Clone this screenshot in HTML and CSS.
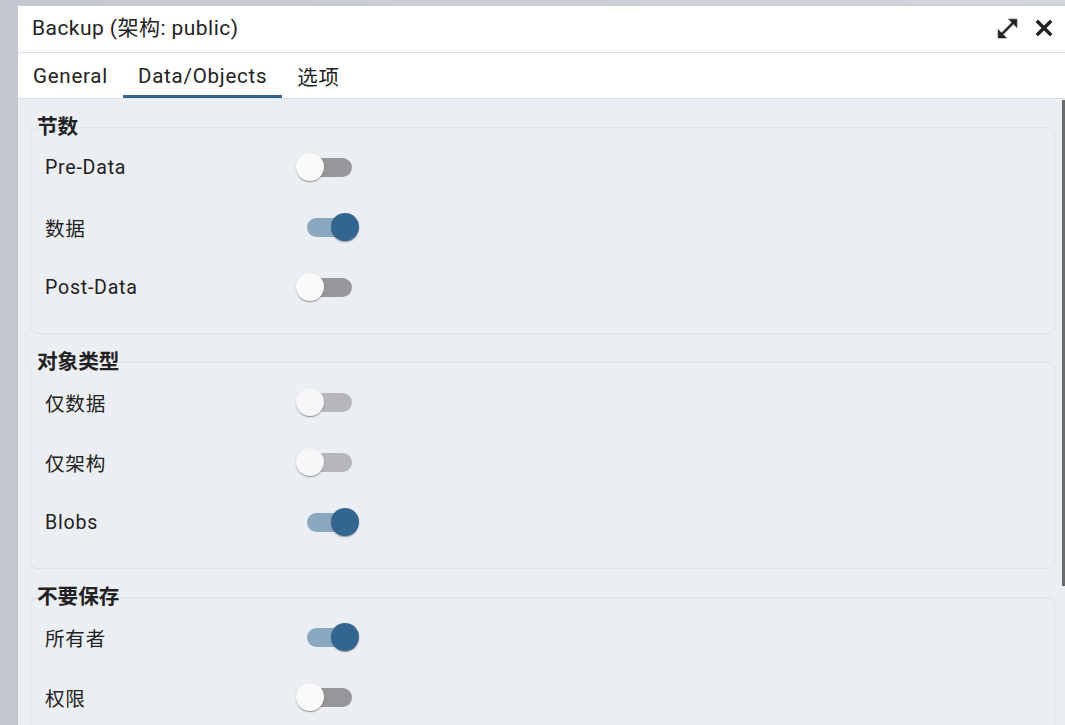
FILE: index.html
```html
<!DOCTYPE html>
<html lang="zh">
<head>
<meta charset="utf-8">
<title>Backup</title>
<link rel="stylesheet" href="styles.css">
</head>
<body>
<div class="dialog">
  <div class="titlebar">
    <span class="title">Backup (架构: public)</span>
    <div class="actions">
      <svg class="icon-expand" viewBox="0 0 24 24" width="25" height="25"><path d="M21 11V3h-8l3.29 3.29-10 10L3 13v8h8l-3.29-3.29 10-10z"/></svg>
      <svg class="icon-close" viewBox="0 0 16 16" width="16" height="16"><path d="M2 2L14 14M14 2L2 14"/></svg>
    </div>
  </div>
  <div class="tabs">
    <div class="tab">General</div>
    <div class="tab active">Data/Objects</div>
    <div class="tab">选项</div>
  </div>
  <div class="body-area">
    <div class="content">
      <fieldset class="section">
        <legend>节数</legend>
        <div class="row"><span class="label">Pre-Data</span><span class="switch"><span class="track"></span><span class="thumb"></span></span></div>
        <div class="row"><span class="label">数据</span><span class="switch on"><span class="track"></span><span class="thumb"></span></span></div>
        <div class="row"><span class="label">Post-Data</span><span class="switch"><span class="track"></span><span class="thumb"></span></span></div>
      </fieldset>
      <fieldset class="section">
        <legend>对象类型</legend>
        <div class="row"><span class="label">仅数据</span><span class="switch disabled"><span class="track"></span><span class="thumb"></span></span></div>
        <div class="row"><span class="label">仅架构</span><span class="switch disabled"><span class="track"></span><span class="thumb"></span></span></div>
        <div class="row"><span class="label">Blobs</span><span class="switch on"><span class="track"></span><span class="thumb"></span></span></div>
      </fieldset>
      <fieldset class="section">
        <legend>不要保存</legend>
        <div class="row"><span class="label">所有者</span><span class="switch on"><span class="track"></span><span class="thumb"></span></span></div>
        <div class="row"><span class="label">权限</span><span class="switch"><span class="track"></span><span class="thumb"></span></span></div>
      </fieldset>
    </div>
    <div class="scroll-thumb"></div>
  </div>
</div>
</body>
</html>
```
FILE: styles.css
```css
* { box-sizing: border-box; }
html, body { height: 100%; }
body {
  margin: 0;
  background: linear-gradient(90deg, #c3c7d0 0%, #d3d6dd 100%);
  font-family: Roboto, "Noto Sans CJK SC", sans-serif;
  color: #222222;
  overflow: hidden;
}
.dialog {
  margin: 5px 0 0 17px;
  height: 720px;
  background: #ffffff;
  border-left: 1px solid #c2c6ce;
  border-top: 1px solid #c9ccd3;
  display: flex;
  flex-direction: column;
}
.titlebar {
  height: 47px;
  flex: none;
  display: flex;
  align-items: center;
  padding: 0 13px 6px 14px;
  border-bottom: 1px solid #dde1e7;
}
.title {
  font-size: 21px;
  letter-spacing: 0.45px;
  flex: 1;
}
.actions {
  display: flex;
  align-items: center;
  gap: 16px;
  padding-top: 4px;
}
.icon-expand { fill: #222222; stroke: #222222; stroke-width: 0.6; stroke-linejoin: miter; }
.icon-close { fill: none; stroke: #222222; stroke-width: 3.4; stroke-linecap: square; }
.tabs {
  height: 46px;
  flex: none;
  display: flex;
  border-bottom: 1px solid #dde1e7;
}
.tab {
  padding: 0 15px;
  font-size: 20.5px;
  letter-spacing: 0.75px;
  display: flex;
  align-items: center;
  border-bottom: 3px solid transparent;
  padding-top: 3px;
  color: #222222;
}
.tab.active { border-bottom-color: #326690; }
.body-area {
  flex: 1;
  min-height: 0;
  position: relative;
  background: #ebeef3;
}
.content {
  height: 100%;
  overflow: hidden;
  padding: 18px 10px 0 12px;
}
.scroll-thumb {
  position: absolute;
  right: 0;
  top: 1px;
  width: 3px;
  height: 486px;
  background: #6a6a6a;
}
.section {
  margin: 0 0 18px 0;
  border: 1px solid #dde1e7;
  border-radius: 8px;
  padding: 0 14px 16px 14px;
  min-width: 0;
}
.section legend {
  font-size: 20.6px;
  font-weight: 700;
  line-height: 20px;
  padding: 0;
  margin-left: -8px;
  color: #222222;
}
.row {
  height: 60px;
  display: grid;
  grid-template-columns: 250px 1fr;
  align-items: center;
}
.label {
  font-size: 19.6px;
  letter-spacing: 0.75px;
}
.switch {
  position: relative;
  display: block;
  width: 66px;
  height: 38px;
}
.track {
  position: absolute;
  left: 12px;
  top: 9.5px;
  width: 45px;
  height: 19px;
  border-radius: 10px;
  background: #97979b;
}
.thumb {
  position: absolute;
  left: 1px;
  top: 5px;
  width: 28px;
  height: 28px;
  border-radius: 50%;
  background: #fafafa;
  box-shadow: 0 2px 1px -1px rgba(0,0,0,0.2), 0 1px 1px 0 rgba(0,0,0,0.14), 0 1px 3px 0 rgba(0,0,0,0.12);
}
.switch.disabled .track { background: #b6b7ba; }
.switch.disabled .thumb { background: #f6f7f9; }
.switch.on .track { background: #8ba8c1; }
.switch.on .thumb { left: 36px; background: #326690; }
```
